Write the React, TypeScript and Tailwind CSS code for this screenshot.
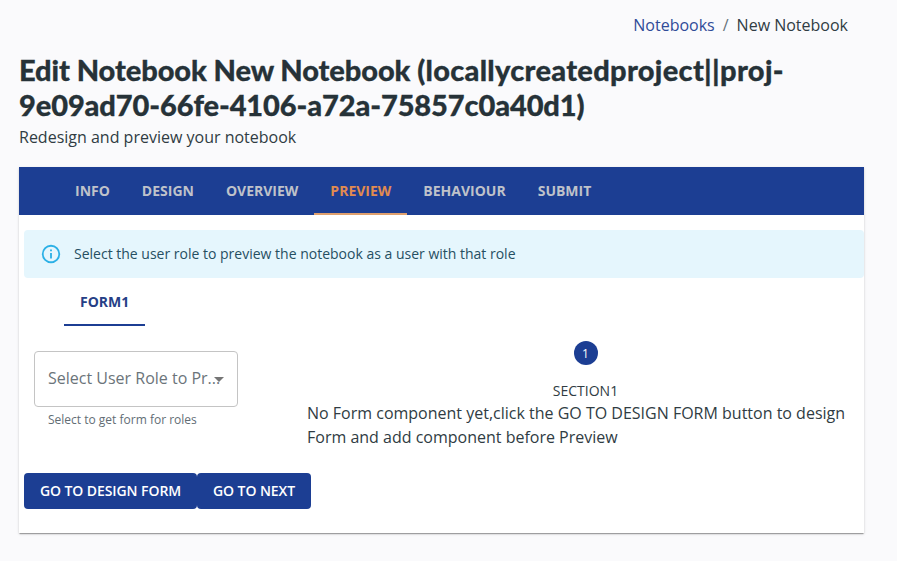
const tabs = ["INFO", "DESIGN", "OVERVIEW", "PREVIEW", "BEHAVIOUR", "SUBMIT"];

export default function App() {
  return (
    <div className="min-h-[561px] bg-[#fafafc] px-[19px] pr-[33px] font-['Open_Sans',sans-serif] text-[#303c43]">
      <nav className="flex h-[50px] items-center justify-end gap-2 pr-4 text-base leading-6">
        <a className="text-[#304b98]">Notebooks</a>
        <span className="text-[#66727a]">/</span>
        <span>New Notebook</span>
      </nav>
      <h1 className="pt-[2px] font-['Lato',sans-serif] text-[29px] leading-[35px] font-black whitespace-nowrap text-[#263238] [-webkit-text-stroke:0.3px_#263238]">
        <span className="tracking-[-0.08px]">Edit Notebook New Notebook </span>
        <span className="tracking-[0.3px]">(locallycreatedproject||proj-</span>
        <br />
        <span className="tracking-[-0.1px]">9e09ad70-66fe-4106-a72a-75857c0a40d1)</span>
      </h1>
      <p className="mt-[3px] text-base leading-6">Redesign and preview your notebook</p>
      <main className="mt-[18px] h-[366px] bg-white shadow-[0_2px_1px_-1px_rgba(0,0,0,0.2),0_1px_1px_rgba(0,0,0,0.14),0_1px_3px_rgba(0,0,0,0.12)]">
        <div className="flex h-12 bg-[#1c3e93] pl-10">
          {tabs.map((t) => (
            <button key={t} className={t === "PREVIEW" ? "border-b-2 border-[#dfa06e] px-4 pt-[2px] text-sm font-bold text-[#e18b50]" : "border-b-2 border-transparent px-4 pt-[2px] text-sm font-bold text-[#bfc2ca]"}>{t}</button>
          ))}
        </div>
        <div className="mt-[15px] ml-[5px] flex h-12 items-center rounded bg-[#e5f6fd] pl-4 text-sm text-[#264f62]">
          <svg width="22" height="22" viewBox="0 0 24 24" className="mr-3 fill-[#2bb0e6]">
            <path d="M11,7H13V9H11V7M11,11H13V17H11V11M12,2A10,10 0 0,0 2,12A10,10 0 0,0 12,22A10,10 0 0,0 22,12A10,10 0 0,0 12,2M12,20C7.59,20 4,16.41 4,12C4,7.59 7.59,4 12,4C16.41,4 20,7.59 20,12C20,16.41 16.41,20 12,20Z" />
          </svg>
          Select the user role to preview the notebook as a user with that role
        </div>
        <button className="ml-[45px] block h-12 border-b-2 border-[#1c3e93] px-4 pt-[2px] text-sm font-bold text-[#263f86]">FORM1</button>
        <div className="flex h-[147px]">
          <div className="w-[288px] pt-[25px] pl-[15px]">
            <div className="flex h-14 w-[204px] items-center rounded border border-[#c4c4c4] pl-[13px] text-base text-[#6b747a]">
              <span className="w-[176px] pb-[2px] whitespace-nowrap">Select User Role to Pr...</span>
              <svg width="24" height="24" viewBox="0 0 24 24" className="-ml-[17px] shrink-0 fill-[#757575]"><path d="M7 10l5 5 5-5z" /></svg>
            </div>
            <p className="mt-[3px] ml-[14px] text-xs leading-5 text-[#626d75]">Select to get form for roles</p>
          </div>
          <div className="flex-1 pt-[15px]">
            <div className="flex w-[557px] flex-col items-center text-sm">
              <span className="flex size-6 items-center justify-center rounded-full bg-[#1c3e93] pt-px text-xs text-white">1</span>
              <span className="mt-[16px] leading-5">SECTION1</span>
            </div>
            <p className="text-base leading-6">No Form component yet,click the GO TO DESIGN FORM button to design<br />Form and add component before Preview</p>
          </div>
        </div>
        <div className="ml-[5px] flex">
          <button className="h-9 w-[173px] rounded bg-[#1c3e93] text-sm font-semibold tracking-[-0.08px] whitespace-nowrap text-white">GO TO DESIGN FORM</button>
          <button className="h-9 w-[114px] rounded bg-[#1c3e93] text-sm font-semibold tracking-[-0.08px] whitespace-nowrap text-white">GO TO NEXT</button>
        </div>
      </main>
    </div>
  );
}
